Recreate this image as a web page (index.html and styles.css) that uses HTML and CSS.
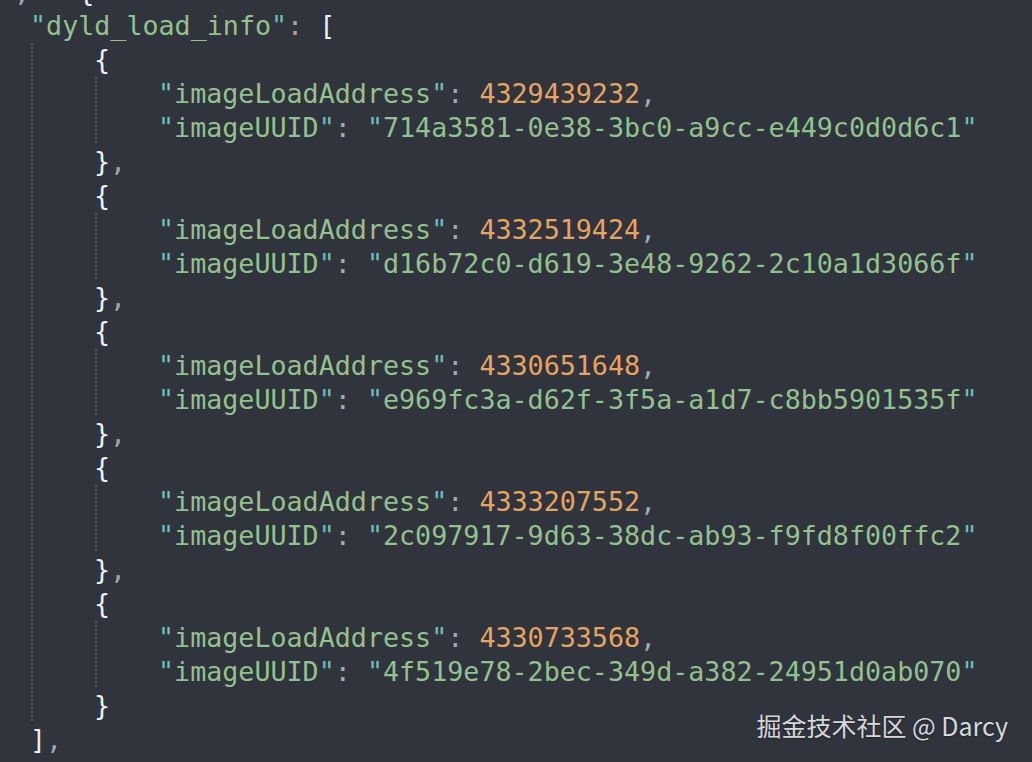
FILE: index.html
```html
<!DOCTYPE html>
<html lang="en">
<head>
<meta charset="utf-8">
<title>dyld_load_info</title>
<link rel="stylesheet" href="styles.css">
</head>
<body>
<div class="editor">
  <div class="code">
    <div class="line above"> <span class="p">,</span>   <span class="b">{</span></div>
    <div class="line"><span class="q">"</span><span class="s">dyld_load_info</span><span class="q">"</span><span class="p">: </span><span class="b">[</span></div>
    <div class="block">
      <div class="line"><span class="b">{</span></div>
      <div class="block">
        <div class="line"><span class="q">"</span><span class="s">imageLoadAddress</span><span class="q">"</span><span class="p">: </span><span class="n">4329439232</span><span class="p">,</span></div>
        <div class="line"><span class="q">"</span><span class="s">imageUUID</span><span class="q">"</span><span class="p">: </span><span class="q">"</span><span class="s">714a3581-0e38-3bc0-a9cc-e449c0d0d6c1</span><span class="q">"</span></div>
      </div>
      <div class="line"><span class="b">}</span><span class="p">,</span></div>
      <div class="line"><span class="b">{</span></div>
      <div class="block">
        <div class="line"><span class="q">"</span><span class="s">imageLoadAddress</span><span class="q">"</span><span class="p">: </span><span class="n">4332519424</span><span class="p">,</span></div>
        <div class="line"><span class="q">"</span><span class="s">imageUUID</span><span class="q">"</span><span class="p">: </span><span class="q">"</span><span class="s">d16b72c0-d619-3e48-9262-2c10a1d3066f</span><span class="q">"</span></div>
      </div>
      <div class="line"><span class="b">}</span><span class="p">,</span></div>
      <div class="line"><span class="b">{</span></div>
      <div class="block">
        <div class="line"><span class="q">"</span><span class="s">imageLoadAddress</span><span class="q">"</span><span class="p">: </span><span class="n">4330651648</span><span class="p">,</span></div>
        <div class="line"><span class="q">"</span><span class="s">imageUUID</span><span class="q">"</span><span class="p">: </span><span class="q">"</span><span class="s">e969fc3a-d62f-3f5a-a1d7-c8bb5901535f</span><span class="q">"</span></div>
      </div>
      <div class="line"><span class="b">}</span><span class="p">,</span></div>
      <div class="line"><span class="b">{</span></div>
      <div class="block">
        <div class="line"><span class="q">"</span><span class="s">imageLoadAddress</span><span class="q">"</span><span class="p">: </span><span class="n">4333207552</span><span class="p">,</span></div>
        <div class="line"><span class="q">"</span><span class="s">imageUUID</span><span class="q">"</span><span class="p">: </span><span class="q">"</span><span class="s">2c097917-9d63-38dc-ab93-f9fd8f00ffc2</span><span class="q">"</span></div>
      </div>
      <div class="line"><span class="b">}</span><span class="p">,</span></div>
      <div class="line"><span class="b">{</span></div>
      <div class="block">
        <div class="line"><span class="q">"</span><span class="s">imageLoadAddress</span><span class="q">"</span><span class="p">: </span><span class="n">4330733568</span><span class="p">,</span></div>
        <div class="line"><span class="q">"</span><span class="s">imageUUID</span><span class="q">"</span><span class="p">: </span><span class="q">"</span><span class="s">4f519e78-2bec-349d-a382-24951d0ab070</span><span class="q">"</span></div>
      </div>
      <div class="line"><span class="b">}</span></div>
    </div>
    <div class="line"><span class="b">]</span><span class="p">,</span></div>
    <div class="line"><span class="q">"</span><span class="s">sharedCacheId</span><span class="q">"</span><span class="p">: </span><span class="b">{</span></div>
  </div>
  <div class="watermark">掘金技术社区 @ Darcy</div>
</div>
</body>
</html>
```

FILE: styles.css
```css
html, body {
  margin: 0;
  padding: 0;
}

body {
  background: #2f343d;
  width: 1032px;
  height: 762px;
  overflow: hidden;
}

.editor {
  position: relative;
  width: 1032px;
  height: 762px;
  overflow: hidden;
  background: #2f343d;
}

.code {
  margin-top: -25px;
  padding-left: 30px;
  font-family: "DejaVu Sans Mono", "Liberation Mono", monospace;
  font-size: 26.7px;
  line-height: 34px;
  color: #e6e6e6;
}

.line {
  white-space: pre;
  height: 34px;
}

.above {
  margin-left: -32px;
}

.block {
  padding-left: 64px;
  background-image: repeating-linear-gradient(to bottom, #535963 0 2px, transparent 2px 4px);
  background-repeat: no-repeat;
  background-size: 2px 100%;
  background-position: 1px 0;
}

.q { color: #6cbfba; }
.s { color: #93c28c; }
.n { color: #e9a45c; }
.p { color: #a4a8ad; }
.b { color: #eef0f2; }

.watermark {
  position: absolute;
  right: 24px;
  top: 708px;
  font-family: "Noto Sans CJK SC", "Noto Sans", sans-serif;
  font-size: 25px;
  line-height: 34px;
  color: #d6d8db;
  text-shadow: 0 1px 2px rgba(0, 0, 0, 0.35);
}
```
